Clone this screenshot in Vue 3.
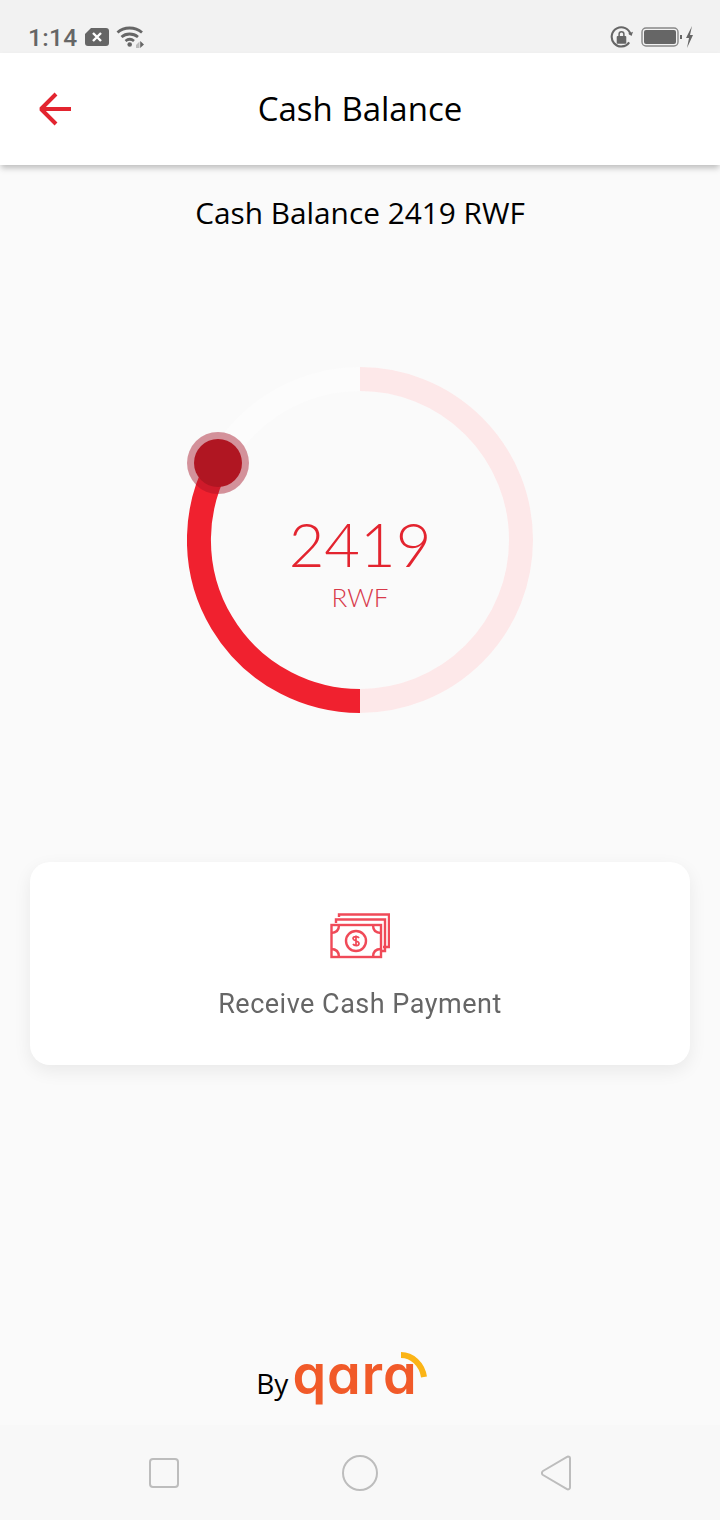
<template>
  <div class="screen">
    <div class="status-bar">
      <div class="status-left">
        <span class="time">1:14</span>
        <svg class="sim" width="24" height="18" viewBox="0 0 24 18">
          <path d="M6 0H21a3 3 0 0 1 3 3V15a3 3 0 0 1-3 3H3a3 3 0 0 1-3-3V6Z" fill="#666" />
          <path d="M8 5l8 8M16 5l-8 8" stroke="#fff" stroke-width="2.4" />
        </svg>
        <svg class="wifi" width="28" height="22" viewBox="0 0 28 22">
          <path d="M1.500 6.500C8 .5 19 .5 26 6.500M5.500 11C10 7 17 7 22 11M9.500 15C12 13 15.500 13 18 15" fill="none" stroke="#666" stroke-width="2.800" />
          <circle cx="13.700" cy="18.500" r="2.300" fill="#666" />
          <path d="M20 19l3.500-3.500V22H20Z" fill="#bbb" />
          <path d="M24.200 15l3.800 3.500-3.800 3.500Z" fill="#666" />
        </svg>
      </div>
      <div class="status-right">
        <svg width="23" height="23" viewBox="0 0 24 24">
          <path d="M20 17A10 10 0 1 1 21.500 9" fill="none" stroke="#666" stroke-width="2.200" />
          <path d="M19 8l3.500 2.500L24 6Z" fill="#666" />
          <rect x="7" y="10.500" width="10" height="8" rx="1" fill="#666" />
          <path d="M9.500 11V8.500a2.500 2.500 0 0 1 5 0V11" fill="none" stroke="#666" stroke-width="1.600" />
        </svg>
        <svg class="battery" width="52" height="24" viewBox="0 0 52 24">
          <rect x="1" y="3" width="36" height="18" rx="4" fill="none" stroke="#888" stroke-width="1.400" />
          <rect x="3" y="5" width="32" height="14" rx="2" fill="#666" />
          <rect x="39" y="10" width="2" height="4" fill="#666" />
          <path d="M51 1l-6 12h3l-2 10 6-13h-3Z" fill="#666" />
        </svg>
      </div>
    </div>

    <header class="app-bar">
      <svg class="back" width="36" height="36" viewBox="0 0 36 36">
        <path d="M32 18H3M17 3L2 18l15 15" fill="none" stroke="#e3242f" stroke-width="4" stroke-linejoin="bevel" />
      </svg>
      <h1 class="title">Cash Balance</h1>
    </header>

    <main class="content">
      <p class="balance">Cash Balance {{ amount }} {{ currency }}</p>

      <div class="gauge">
        <svg width="346" height="346" viewBox="0 0 346 346">
          <circle cx="173" cy="173" r="161" fill="none" stroke="#fcfcfc" stroke-width="24" />
          <path d="M173 12A161 161 0 0 1 173 334" fill="none" stroke="#fde8e9" stroke-width="24" />
          <path d="M173 334A161 161 0 0 1 31 97" fill="none" stroke="#f0212f" stroke-width="24" />
          <circle cx="31" cy="96" r="31" fill="#a31226" fill-opacity="0.45" />
          <circle cx="31" cy="96" r="24" fill="#b01622" />
        </svg>
        <div class="gauge-label">
          <span class="gauge-value">{{ amount }}</span>
          <span class="gauge-unit">{{ currency }}</span>
        </div>
      </div>

      <div class="action-card">
        <svg class="cash-icon" width="60" height="46" viewBox="0 0 60 46">
          <g fill="none" stroke="#f04a58" stroke-width="2.400">
            <path d="M9 4V1.500H59V34H53" />
            <path d="M6 10V6.500H55V38H50" />
            <rect x="1.500" y="12" width="49.500" height="32" />
            <circle cx="26" cy="28" r="10" />
            <path d="M1 20c5 0 8-3 8-8M51 20c-5 0-8-3-8-8M1 36c5 0 8 3 8 8M51 36c-5 0-8 3-8 8" />
            <path d="M29 25c-1-2-6-2-6 .500s6 2 6 5-5 2.500-6 .500M26 22.500v11" stroke-width="1.700" />
          </g>
        </svg>
        <span class="action-label">Receive Cash Payment</span>
      </div>

      <div class="brand">
        <span class="by">By</span>
        <span class="logo">
          <span class="logo-text">qara</span>
          <svg class="logo-arc" width="30" height="28" viewBox="0 0 30 28">
            <path d="M3 3C14 3 24 12 26 25" fill="none" stroke="#fbb416" stroke-width="6" />
          </svg>
        </span>
      </div>
    </main>

    <nav class="nav-bar">
      <svg width="30" height="30" viewBox="0 0 30 30">
        <rect x="1" y="1" width="28" height="28" rx="3" fill="none" stroke="#bdbdbd" stroke-width="2" />
      </svg>
      <svg width="36" height="36" viewBox="0 0 36 36">
        <circle cx="18" cy="18" r="17" fill="none" stroke="#bdbdbd" stroke-width="2" />
      </svg>
      <svg width="30" height="36" viewBox="0 0 30 36">
        <path d="M27 1.500a2 2 0 0 1 2 2V32.500a2 2 0 0 1-3 1.700L2 20a2.400 2.400 0 0 1 0-4L26 1.800Z" fill="none" stroke="#bdbdbd" stroke-width="2" />
      </svg>
    </nav>
  </div>
</template>

<script setup>
const amount = 2419
const currency = 'RWF'
</script>

<style>
html,
body {
  margin: 0;
  background: #fafafa;
}
</style>

<style scoped>
.screen {
  width: 720px;
  height: 1520px;
  display: flex;
  flex-direction: column;
  background: #fafafa;
  overflow: hidden;
  font-family: "Open Sans", "Liberation Sans", sans-serif;
}

.status-bar {
  height: 53px;
  box-sizing: border-box;
  padding: 25px 27px 0 28px;
  background: #f2f2f2;
  display: flex;
  justify-content: space-between;
  align-items: flex-start;
}

.status-left,
.status-right {
  display: flex;
  align-items: center;
  height: 24px;
}

.time {
  font-family: Roboto, sans-serif;
  font-size: 24.5px;
  font-weight: 500;
  color: #666;
  letter-spacing: 0.3px;
  line-height: 26px;
  margin-top: 2px;
}

.sim {
  margin-left: 8px;
}

.wifi {
  margin-left: 7px;
}

.battery {
  margin-left: 8px;
}

.app-bar {
  height: 112px;
  flex: none;
  background: #fff;
  box-shadow: 0 4px 6px -1px rgba(0, 0, 0, 0.25);
  display: flex;
  align-items: center;
  justify-content: center;
  position: relative;
  z-index: 1;
}

.back {
  position: absolute;
  left: 39px;
  top: 38px;
}

.title {
  margin: -2px 0 0;
  font-size: 33px;
  font-weight: 400;
  color: #000;
}

.content {
  flex: 1;
  display: flex;
  flex-direction: column;
  align-items: center;
}

.balance {
  margin: 28px 0 0;
  font-size: 29.8px;
  line-height: 40px;
  color: #000;
}

.gauge {
  margin-top: 134px;
  width: 346px;
  height: 346px;
  position: relative;
}

.gauge svg {
  display: block;
}

.gauge-label {
  position: absolute;
  inset: 0;
  box-sizing: border-box;
  padding-top: 141px;
  display: flex;
  flex-direction: column;
  align-items: center;
  font-family: Lato, sans-serif;
  font-weight: 300;
  color: #e3242f;
}

.gauge-value {
  font-size: 61.5px;
  line-height: 70px;
}

.gauge-unit {
  margin-top: 3px;
  font-size: 26px;
  line-height: 32px;
  color: #d8394a;
}

.action-card {
  margin-top: 149px;
  width: 660px;
  height: 203px;
  box-sizing: border-box;
  padding-top: 51px;
  background: #fff;
  border-radius: 20px;
  box-shadow: 0 6px 18px rgba(0, 0, 0, 0.07);
  display: flex;
  flex-direction: column;
  align-items: center;
}

.cash-icon {
  filter: blur(0.5px);
}

.action-label {
  margin-top: 27px;
  font-family: Roboto, sans-serif;
  font-size: 27px;
  line-height: 36px;
  letter-spacing: 0.5px;
  color: #666;
  filter: blur(0.4px);
}

.brand {
  margin-top: 280px;
  margin-right: 46px;
  display: flex;
  align-items: baseline;
  color: #000;
}

.by {
  font-size: 28px;
}

.logo {
  position: relative;
  display: inline-block;
  margin-left: 4px;
}

.logo-text {
  font-family: Inter, sans-serif;
  font-feature-settings: "cv11";
  font-size: 54px;
  font-weight: 600;
  letter-spacing: 1px;
  line-height: 60px;
  color: #f15a29;
}

.logo-arc {
  position: absolute;
  right: -10px;
  top: 7px;
}

.nav-bar {
  height: 95px;
  flex: none;
  background: #f8f8f8;
  display: flex;
  align-items: center;
  justify-content: space-between;
  box-sizing: border-box;
  padding: 0 149px;
}
</style>
